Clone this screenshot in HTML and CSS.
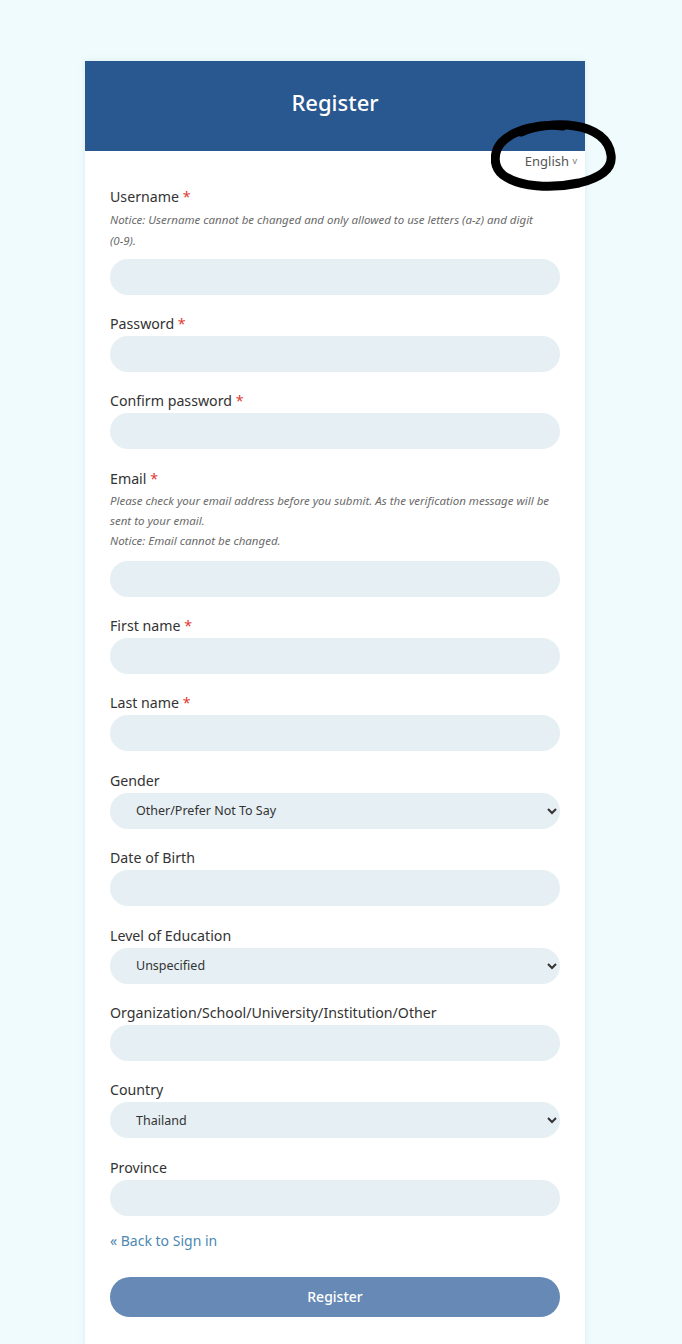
FILE: index.html
```html
<!DOCTYPE html>
<html lang="en">
<head>
<meta charset="utf-8">
<title>Register</title>
<link rel="stylesheet" href="styles.css">
</head>
<body>
<div class="page">
  <div class="card">
    <div class="card-header">Register</div>
    <div class="card-body">
      <div class="lang-row"><span class="lang">English <span class="caret">v</span></span></div>
      <form class="form">
        <div class="group">
          <label class="label">Username <span class="req">*</span></label>
          <div class="notes notes-user">
            <div>Notice: Username cannot be changed and only allowed to use letters (a-z) and digit <span class="nowrap">(0-9).</span></div>
          </div>
          <input class="field" type="text">
        </div>
        <div class="group">
          <label class="label">Password <span class="req">*</span></label>
          <input class="field" type="password">
        </div>
        <div class="group">
          <label class="label">Confirm password <span class="req">*</span></label>
          <input class="field" type="password">
        </div>
        <div class="group">
          <label class="label">Email <span class="req">*</span></label>
          <div class="notes notes-email">
            <div>Please check your email address before you submit. As the verification message will be sent to your email.</div>
            <div>Notice: Email cannot be changed.</div>
          </div>
          <input class="field" type="text">
        </div>
        <div class="group">
          <label class="label">First name <span class="req">*</span></label>
          <input class="field" type="text">
        </div>
        <div class="group">
          <label class="label">Last name <span class="req">*</span></label>
          <input class="field" type="text">
        </div>
        <div class="group">
          <label class="label">Gender</label>
          <select class="field select"><option>Other/Prefer Not To Say</option></select>
        </div>
        <div class="group">
          <label class="label">Date of Birth</label>
          <input class="field" type="text">
        </div>
        <div class="group">
          <label class="label">Level of Education</label>
          <select class="field select"><option>Unspecified</option></select>
        </div>
        <div class="group">
          <label class="label">Organization/School/University/Institution/Other</label>
          <input class="field" type="text">
        </div>
        <div class="group">
          <label class="label">Country</label>
          <select class="field select"><option>Thailand</option></select>
        </div>
        <div class="group">
          <label class="label">Province</label>
          <input class="field" type="text">
        </div>
        <a class="back" href="#">« Back to Sign in</a>
        <button class="submit" type="button">Register</button>
      </form>
    </div>
    <svg class="scribble" width="130" height="80" viewBox="0 0 130 80">
      <path d="M72 9 C52 6 22 12 10 26 C2 36 2 50 12 58 C28 70 60 72 88 66 C108 61 122 52 120 38 C118 22 104 12 84 9 C66 6 44 9 30 15" fill="none" stroke="#000" stroke-width="9" stroke-linecap="round" stroke-linejoin="round"/>
    </svg>
  </div>
</div>
</body>
</html>
```

FILE: styles.css
```css
* { box-sizing: border-box; }
html, body { margin: 0; padding: 0; }
body {
  background: #f0fbfd;
  font-family: "Noto Sans", "Open Sans", sans-serif;
  color: #333;
}
.page {
  padding-top: 61px;
  display: flex;
  justify-content: center;
}
.card {
  position: relative;
  width: 500px;
  margin-right: 12px;
  background: #ffffff;
  box-shadow: 0 0 6px rgba(150, 190, 200, 0.25);
  min-height: 1300px;
}
.card-header {
  height: 90px;
  background: #29578f;
  color: #ffffff;
  font-size: 22px;
  font-weight: 500;
  display: flex;
  align-items: center;
  justify-content: center;
  padding-bottom: 8px;
}
.card-body {
  padding: 0 25px 40px 25px;
}
.lang-row {
  display: flex;
  justify-content: flex-end;
  margin-right: -18px;
  height: 20px;
  align-items: center;
}
.lang {
  font-size: 13px;
  color: #555;
  margin-right: 1px;
}
.caret {
  font-size: 9px;
  vertical-align: 2px;
  color: #777;
}
.form {
  margin-top: 16px;
  display: flex;
  flex-direction: column;
}
.group {
  display: flex;
  flex-direction: column;
  margin-bottom: 19.4px;
}
.label {
  font-size: 14.2px;
  line-height: 20px;
  color: #333;
  margin-bottom: 2px;
}
.req { color: #e0392f; }
.notes {
  font-size: 11.5px;
  font-style: italic;
  color: #6b6b6b;
}
.nowrap { white-space: nowrap; }
.notes-user { line-height: 21px; margin-top: -0.5px; margin-bottom: 8px; }
.notes-email { line-height: 20px; margin-bottom: 10px; }
.field {
  display: block;
  width: 450px;
  height: 36px;
  border: none;
  border-radius: 18px;
  background: #e6eff3;
  outline: none;
  font-family: inherit;
}
.select {
  font-size: 12.5px;
  color: #333;
  padding: 0 8px 0 22px;
}
.back {
  font-size: 14px;
  line-height: 20px;
  color: #4d88b2;
  text-decoration: none;
  margin-top: -4.4px;
  align-self: flex-start;
}
.submit {
  margin-top: 26px;
  width: 450px;
  height: 40px;
  border: none;
  border-radius: 20px;
  background: #6689b5;
  color: #ffffff;
  font-family: inherit;
  font-size: 14px;
  font-weight: 500;
}
.scribble {
  position: absolute;
  left: 406px;
  top: 56px;
}
```
